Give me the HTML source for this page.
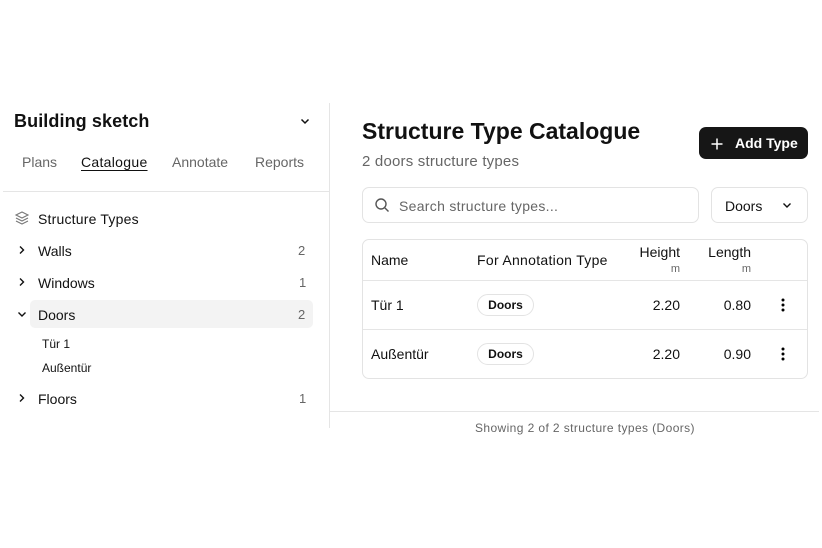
<!DOCTYPE html><html><head><style>
*{margin:0;padding:0;box-sizing:border-box}
body{width:822px;height:548px;background:#fff;font-family:"Liberation Sans",sans-serif;color:#111;position:relative;overflow:hidden}
.a{position:absolute;white-space:nowrap}
.g{color:#666}
.n{color:#666;font-size:13px}
.r{text-align:right}
</style></head><body>
<div class="a" style="left:329px;top:103px;width:1px;height:325px;background:#e5e5e5"></div>
<div class="a" style="left:3px;top:191px;width:326px;height:1px;background:#e5e5e5"></div>
<div class="a" style="left:330px;top:411px;width:489px;height:1px;background:#e5e5e5"></div>
<div class="a" style="left:14px;top:111px;font-size:18px;font-weight:bold;letter-spacing:0.1px">Building sketch</div>
<svg class="a" style="left:299px;top:115px" width="12" height="12" viewBox="0 0 12 12"><path d="M2.5 4.5L6 8l3.5-3.5" fill="none" stroke="#111" stroke-width="1.5"/></svg>
<div class="a g" style="left:22px;top:154px;font-size:14px">Plans</div>
<div class="a" style="left:81px;top:154px;font-size:14px;letter-spacing:0.3px;text-decoration:underline;text-underline-offset:3px">Catalogue</div>
<div class="a g" style="left:172px;top:154px;font-size:14px">Annotate</div>
<div class="a g" style="left:255px;top:154px;font-size:14px">Reports</div>
<svg class="a" style="left:14px;top:210px" width="16" height="16" viewBox="0 0 16 16" fill="none" stroke="#777" stroke-width="1.1"><path d="M8 2L14 5 8 8 2 5z"/><path d="M2 8l6 3 6-3"/><path d="M2 11l6 3 6-3"/></svg>
<div class="a" style="left:38px;top:211px;font-size:14px;letter-spacing:0.2px">Structure Types</div>
<div class="a" style="left:30px;top:300px;width:283px;height:28px;background:#f3f3f3;border-radius:5px"></div>
<svg class="a" style="left:16px;top:244px" width="12" height="12" viewBox="0 0 12 12"><path d="M4 2.5L7.5 6 4 9.5" fill="none" stroke="#111" stroke-width="1.4"/></svg>
<div class="a" style="left:38px;top:243px;font-size:14px">Walls</div><div class="a n" style="left:298px;top:243px">2</div>
<svg class="a" style="left:16px;top:276px" width="12" height="12" viewBox="0 0 12 12"><path d="M4 2.5L7.5 6 4 9.5" fill="none" stroke="#111" stroke-width="1.4"/></svg>
<div class="a" style="left:38px;top:275px;font-size:14px">Windows</div><div class="a n" style="left:299px;top:275px">1</div>
<svg class="a" style="left:16px;top:308px" width="12" height="12" viewBox="0 0 12 12"><path d="M2.5 4.5L6 8l3.5-3.5" fill="none" stroke="#111" stroke-width="1.4"/></svg>
<div class="a" style="left:38px;top:307px;font-size:14px">Doors</div><div class="a n" style="left:298px;top:307px">2</div>
<div class="a" style="left:42px;top:337px;font-size:12px">Tür 1</div>
<div class="a" style="left:42px;top:361px;font-size:12px">Außentür</div>
<svg class="a" style="left:16px;top:392px" width="12" height="12" viewBox="0 0 12 12"><path d="M4 2.5L7.5 6 4 9.5" fill="none" stroke="#111" stroke-width="1.4"/></svg>
<div class="a" style="left:38px;top:391px;font-size:14px">Floors</div><div class="a n" style="left:299px;top:391px">1</div>

<div class="a" style="left:362px;top:118px;font-size:23px;font-weight:bold">Structure Type Catalogue</div>
<div class="a g" style="left:362px;top:153px;font-size:15px;letter-spacing:0.2px">2 doors structure types</div>
<div class="a" style="left:699px;top:127px;width:109px;height:32px;background:#161616;border-radius:7px;color:#fff;font-size:14px;font-weight:bold;padding:8px 0 0 36px">Add Type</div>
<svg class="a" style="left:710px;top:137px" width="14" height="14" viewBox="0 0 14 14"><path d="M7 1.5v11M1.5 7h11" stroke="#fff" stroke-width="1.5"/></svg>
<div class="a" style="left:362px;top:187px;width:337px;height:36px;border:1px solid #e3e3e3;border-radius:7px"></div>
<svg class="a" style="left:374px;top:197px" width="16" height="16" viewBox="0 0 16 16" fill="none" stroke="#555" stroke-width="1.4"><circle cx="7" cy="7" r="5"/><path d="M11 11l3.5 3.5"/></svg>
<div class="a g" style="left:399px;top:198px;font-size:14px;letter-spacing:0.3px">Search structure types...</div>
<div class="a" style="left:711px;top:187px;width:97px;height:36px;border:1px solid #e3e3e3;border-radius:7px;font-size:14px;padding:10px 0 0 13px">Doors</div>
<svg class="a" style="left:781px;top:199px" width="12" height="12" viewBox="0 0 12 12"><path d="M2.5 4.5L6 8l3.5-3.5" fill="none" stroke="#111" stroke-width="1.4"/></svg>
<div class="a" style="left:362px;top:239px;width:446px;height:140px;border:1px solid #e3e3e3;border-radius:7px"></div>
<div class="a" style="left:363px;top:280px;width:444px;height:1px;background:#e5e5e5"></div>
<div class="a" style="left:363px;top:329px;width:444px;height:1px;background:#e5e5e5"></div>
<div class="a" style="left:371px;top:252px;font-size:14px">Name</div>
<div class="a" style="left:477px;top:252px;font-size:14px;letter-spacing:0.3px">For Annotation Type</div>
<div class="a r" style="left:600px;width:80px;top:244px;font-size:14px">Height</div>
<div class="a g r" style="left:600px;width:80px;top:263px;font-size:11px">m</div>
<div class="a r" style="left:670px;width:81px;top:244px;font-size:14px">Length</div>
<div class="a g r" style="left:670px;width:81px;top:263px;font-size:11px">m</div>
<div class="a" style="left:371px;top:297px;font-size:14px">Tür 1</div>
<div class="a" style="left:477px;top:294px;width:57px;height:22px;border:1px solid #e3e3e3;border-radius:11px;font-size:12px;font-weight:bold;text-align:center;padding-top:3px">Doors</div>
<div class="a r" style="left:600px;width:80px;top:297px;font-size:14px">2.20</div>
<div class="a r" style="left:670px;width:81px;top:297px;font-size:14px">0.80</div>
<svg class="a" style="left:780px;top:297px" width="6" height="16"><circle cx="3" cy="3" r="1.5"/><circle cx="3" cy="8" r="1.5"/><circle cx="3" cy="13" r="1.5"/></svg>
<div class="a" style="left:371px;top:346px;font-size:14px">Außentür</div>
<div class="a" style="left:477px;top:343px;width:57px;height:22px;border:1px solid #e3e3e3;border-radius:11px;font-size:12px;font-weight:bold;text-align:center;padding-top:3px">Doors</div>
<div class="a r" style="left:600px;width:80px;top:346px;font-size:14px">2.20</div>
<div class="a r" style="left:670px;width:81px;top:346px;font-size:14px">0.90</div>
<svg class="a" style="left:780px;top:346px" width="6" height="16"><circle cx="3" cy="3" r="1.5"/><circle cx="3" cy="8" r="1.5"/><circle cx="3" cy="13" r="1.5"/></svg>
<div class="a g" style="left:475px;top:421px;font-size:12px;letter-spacing:0.4px">Showing 2 of 2 structure types (Doors)</div>
</body></html>
